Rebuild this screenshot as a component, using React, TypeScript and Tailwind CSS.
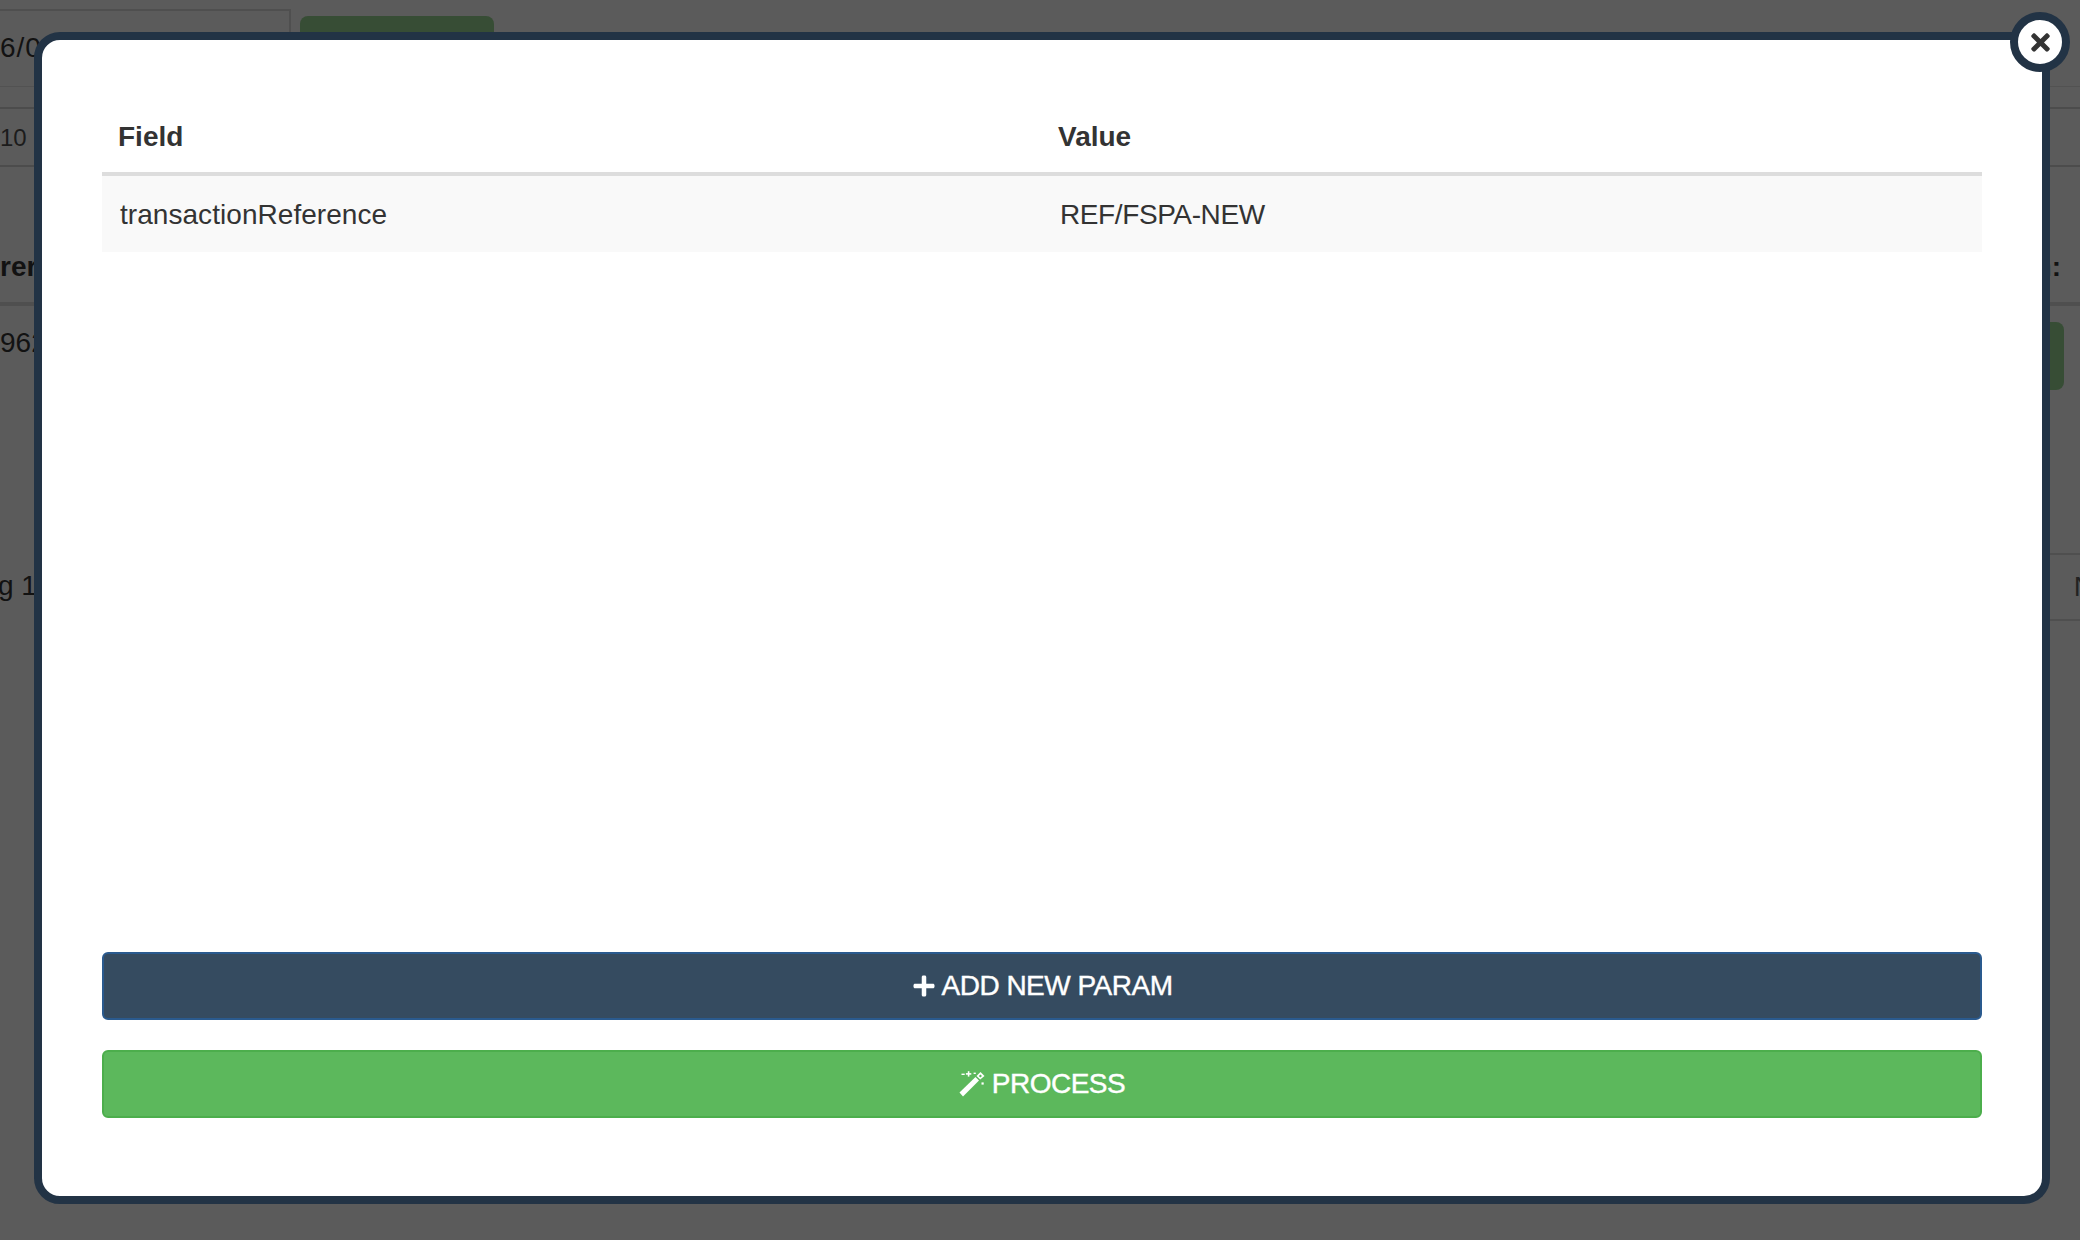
import { FaPlus, FaTimes } from "react-icons/fa";

const sans = "font-['Liberation_Sans',Arial,sans-serif]";

function WandIcon() {
    return (
        <svg viewBox="0 0 26 26" className="h-[26px] w-[26px]" fill="#fff">
            <path d="M0.5 21.5 L16.5 6 L20 9.4 L4 25.5 Z" />
            <path d="M17.5 5 L21.5 1 L25.5 5 L21.2 8.6 Z M19.8 5 L21.3 6.4 L23 5 L21.5 3.4 Z" fillRule="evenodd" />
            <rect x="8.8" y="0.2" width="1.6" height="5.4" />
            <rect x="6.9" y="2.1" width="5.4" height="1.6" />
            <rect x="2.5" y="2.6" width="3.2" height="1.4" />
            <rect x="14.6" y="1.6" width="2.2" height="1.4" />
            <rect x="22.5" y="11.4" width="2.2" height="2.2" />
        </svg>
    );
}

function BackgroundPage() {
    return (
        <div className={`h-[1240px] w-[2080px] overflow-hidden bg-[#5b5b5b] text-[#121212] ${sans}`}>
            <div className="flex h-[87px] items-start border-b border-[#525252] pt-[9px]">
                <div className="h-[77px] w-[291px] border-t-2 border-r-2 border-[#4f4f4f] pt-[17px] text-[28px] leading-[40px] tracking-[1px]">
                    6/0
                </div>
                <div className="ml-[9px] mt-[7px] h-[60px] w-[194px] rounded-[8px] bg-[#374d35]" />
            </div>
            <div className="mt-[20px] flex h-[60px] items-center border-y-2 border-[#4c4c4c] pt-[2px] text-[24px] text-[#1c1c1c]">
                10
            </div>
            <div className="mt-[70px] flex h-[69px] items-start justify-between border-b-4 border-[#4f4f4f] pr-[19px] pt-[14px] text-[28px] font-bold leading-[32px]">
                <span>rer</span>
                <span>n:</span>
            </div>
            <div className="flex h-[84px] items-start justify-between pr-[16px] pt-[16px]">
                <span className="pt-[1px] text-[28px] leading-[40px]">962</span>
                <div className="h-[68px] w-[60px] rounded-[8px] bg-[#374d35]" />
            </div>
            <div className="mt-[163px] flex h-[68px] items-center justify-between text-[28px]">
                <span className="-ml-[2px] -mt-[2px]">g 1</span>
                <div className="flex h-[68px] w-[60px] items-center justify-end overflow-hidden border-y-2 border-[#4f4f4f] text-[#222]">
                    <span className="-mr-[14px]">N</span>
                </div>
            </div>
        </div>
    );
}

function ParamsModal() {
    return (
        <div className={`absolute left-[34px] top-[32px] flex h-[1172px] w-[2016px] flex-col rounded-[26px] border-[8px] border-[#223345] bg-white px-[60px] pb-[78px] pt-[42px] text-[#333] ${sans}`}>
            <button className="absolute -right-[28px] -top-[28px] flex h-[60px] w-[60px] items-center justify-center rounded-full border-[8px] border-[#223345] bg-white text-[#333]">
                <FaTimes className="h-[27px] w-[19px]" />
            </button>

            <table className="w-full table-fixed border-collapse text-[28px] leading-[40px]">
                <thead>
                    <tr className="border-b-4 border-[#ddd]">
                        <th className="h-[92px] w-1/2 px-[16px] pb-[15px] text-left align-bottom font-bold">Field</th>
                        <th className="h-[92px] w-1/2 px-[16px] pb-[15px] text-left align-bottom font-bold">Value</th>
                    </tr>
                </thead>
                <tbody>
                    <tr className="h-[78px] bg-[#f9f9f9]">
                        <td className="pl-[18px] pt-[1px] tracking-[0.05px]">transactionReference</td>
                        <td className="pl-[18px] pt-[1px] tracking-[-0.4px]">REF/FSPA-NEW</td>
                    </tr>
                </tbody>
            </table>

            <div className="mt-auto flex flex-col gap-[30px]">
                <button className="flex h-[68px] items-center justify-center gap-[6px] rounded-[6px] border-2 border-[#2a5a8e] bg-[#354b60] text-[28px] tracking-[-0.5px] text-white [-webkit-text-stroke:0.4px_white]">
                    <FaPlus className="h-[24px] w-[24px]" />
                    ADD NEW PARAM
                </button>
                <button className="flex h-[68px] items-center justify-center gap-[7px] rounded-[6px] border-2 border-[#4cae4c] bg-[#5cb85c] text-[28px] tracking-[-0.5px] text-white [-webkit-text-stroke:0.4px_white]">
                    <WandIcon />
                    PROCESS
                </button>
            </div>
        </div>
    );
}

export default function App() {
    return (
        <div className="relative h-[1240px] w-[2080px] overflow-hidden">
            <BackgroundPage />
            <ParamsModal />
        </div>
    );
}
